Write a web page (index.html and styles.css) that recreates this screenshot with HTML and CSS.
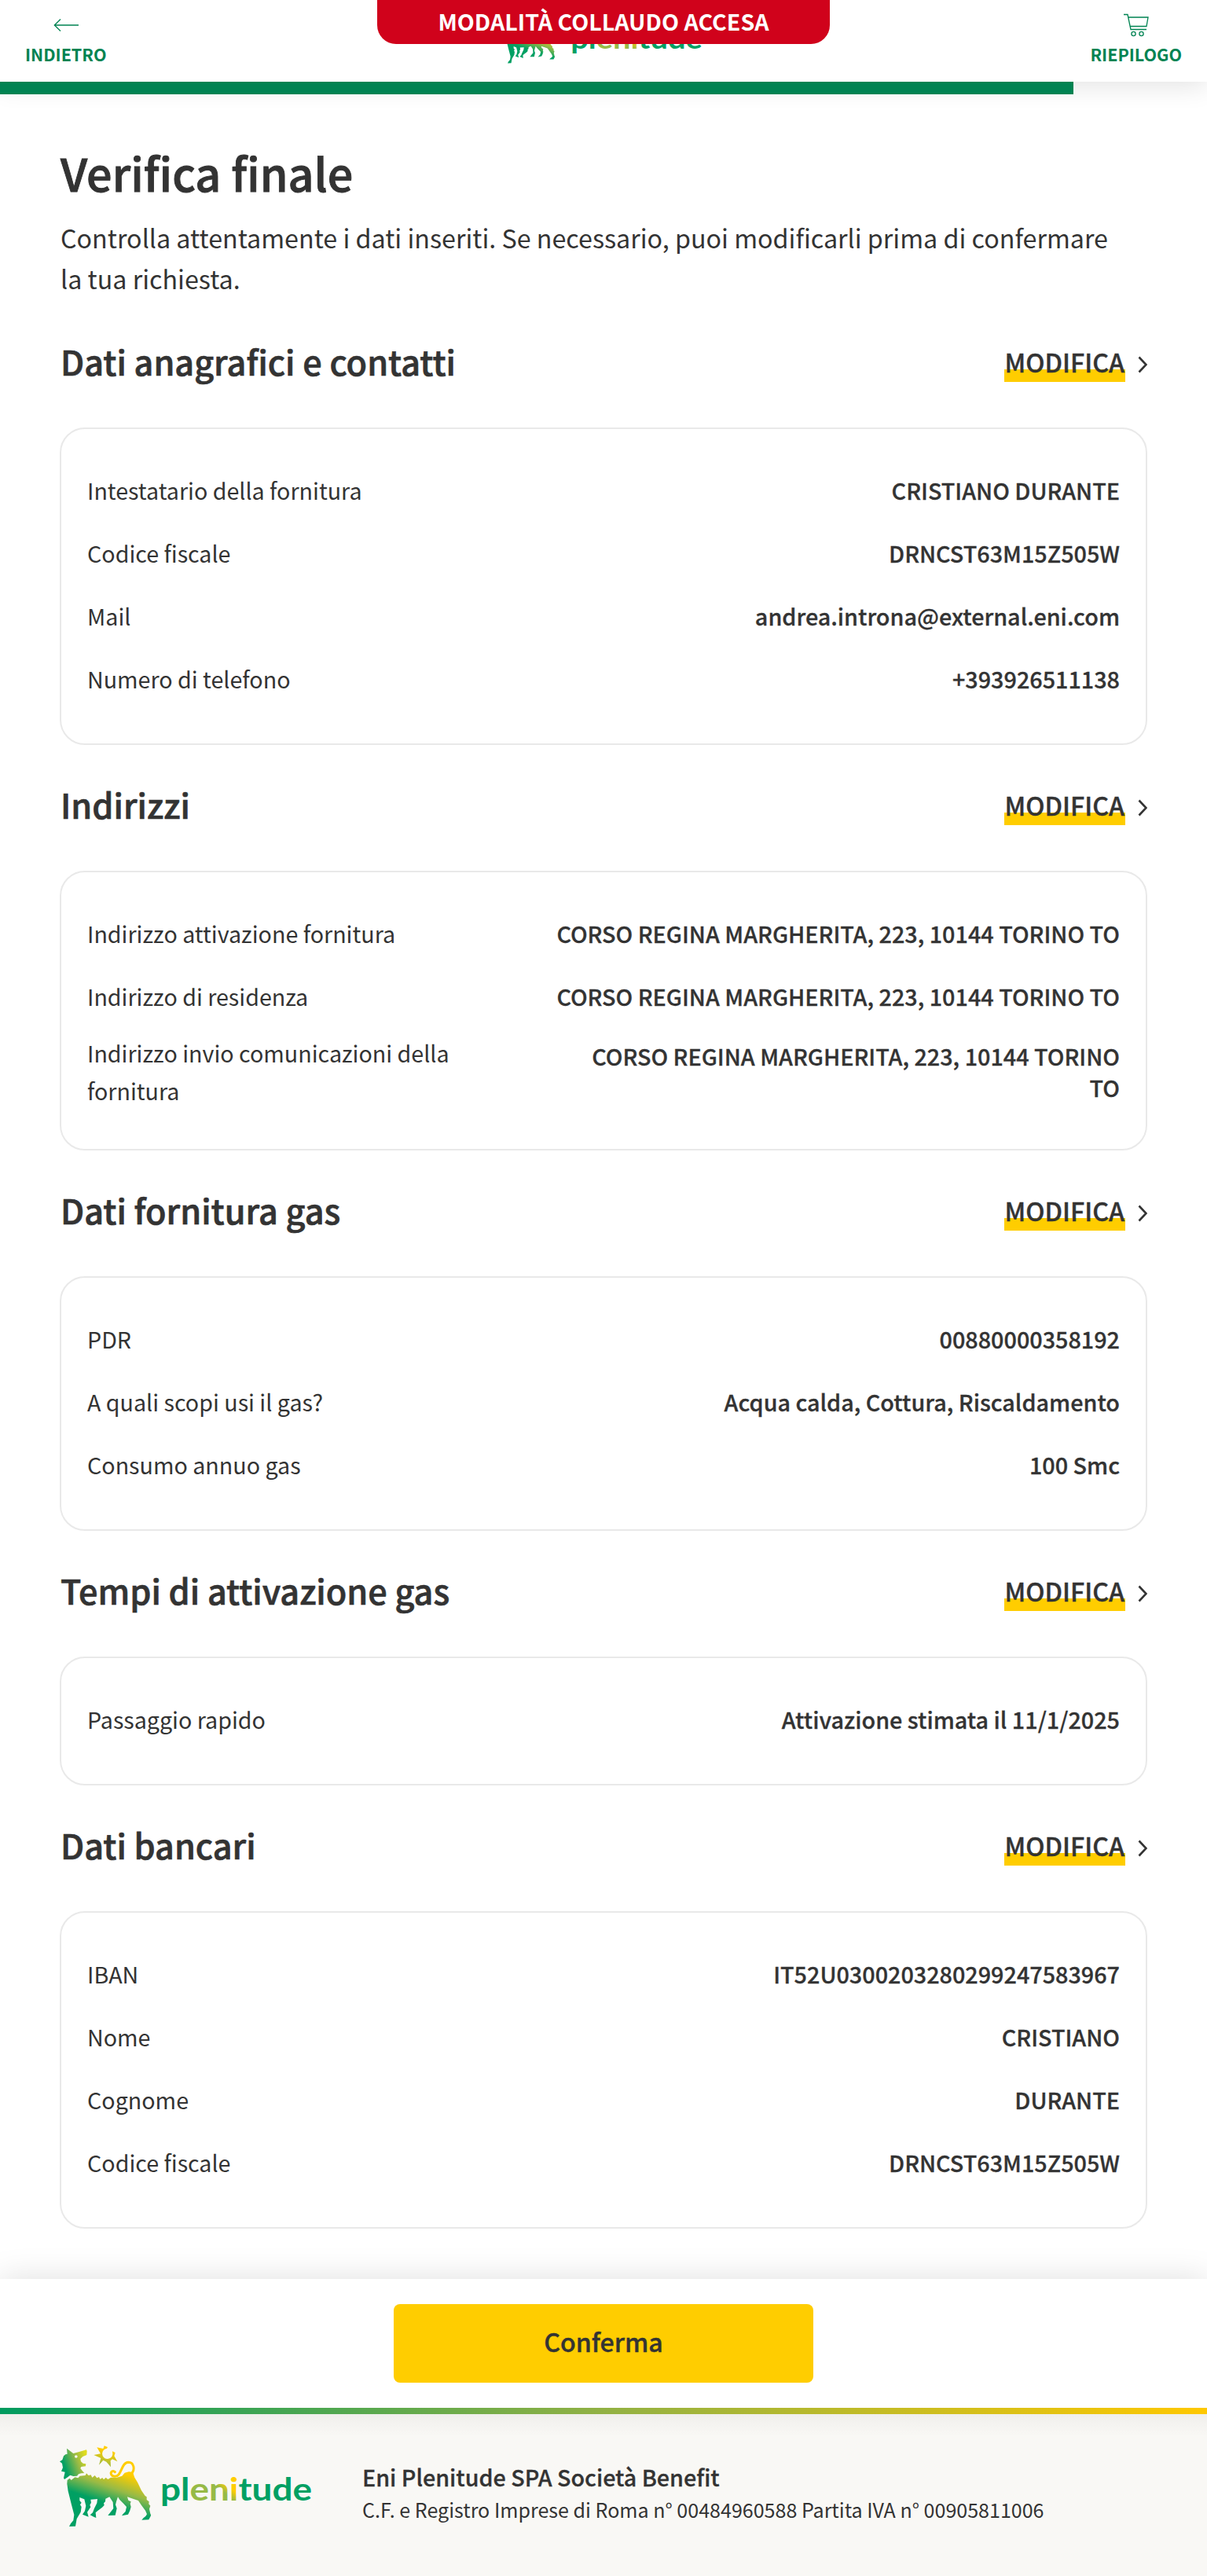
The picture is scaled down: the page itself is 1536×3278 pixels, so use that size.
FILE: index.html
```html
<!DOCTYPE html>
<html lang="it">
<head>
<meta charset="utf-8">
<title>Verifica finale</title>
<link rel="stylesheet" href="styles.css">
</head>
<body>
<svg class="defs" width="0" height="0" aria-hidden="true">
  <defs>
    <linearGradient id="head" gradientUnits="userSpaceOnUse" x1="28" y1="115" x2="120" y2="80"><stop offset=".08" stop-color="#00a063"/><stop offset=".6" stop-color="#97ba46"/><stop offset="1" stop-color="#e0dc1e"/></linearGradient>
    <linearGradient id="back" gradientUnits="userSpaceOnUse" x1="285" y1="145" x2="235" y2="290"><stop offset=".03" stop-color="#ffcd00"/><stop offset=".47" stop-color="#97ba46"/><stop offset=".88" stop-color="#00a063"/></linearGradient>
    <linearGradient id="sun" gradientUnits="userSpaceOnUse" x1="205" y1="50" x2="185" y2="118"><stop offset=".1" stop-color="#ffcd00"/><stop offset="1" stop-color="#97ba46"/></linearGradient>
    <linearGradient id="eni" gradientUnits="userSpaceOnUse" x1="96" y1="2" x2="74" y2="26"><stop offset=".4" stop-color="#ffcd00"/><stop offset=".7" stop-color="#97ba46"/></linearGradient>
    <symbol id="dog" viewBox="18 36 348 312">
      <path fill="url(#head)" fill-rule="evenodd" d="M45 47L58 57L70 66L92 60L120 52L122 58L121 72L106 78L97 87L99 97L107 104L118 106L117 115L100 117L97 123L104 132L112 141L100 142L90 145L84 152L70 153L58 149L46 158L36 165L33 160L38 137L24 134L30 120L27 104L18 97L28 91L33 76L40 70L47 68ZM75 78a5.500 5.500 0 1 0 11 0a5.500 5.500 0 1 0-11 0z"/>
      <path fill="url(#sun)" d="M160 43L184 48L188 37L201 42L198 47A20 20 0 1 0 220 70L219 58L230 63L226 76L238 97L219 88L212 94L213 118L196 98L184 92L168 110L175 84L148 72L174 67Z"/>
      <path fill="none" stroke="#ffcd00" stroke-width="9" stroke-linecap="round" stroke-linejoin="round" d="M229 137C221 129 210 137 215 147C220 156 236 156 243 147C256 131 258 101 280 100C302 100 307 129 291 144"/>
      <path fill="url(#back)" d="M47 168L56 161L62 168L76 157L88 160L95 152L116 150L120 142L128 150L137 148L142 158L152 150L160 160L168 156L172 164L181 159L186 166L194 158L202 165L213 158L236 158L256 152L266 140L282 136L297 138L304 158L315 176L330 208L344 228L350 232L350 243L359 250L358 259L364 266L360 278L364 296L367 302L358 319L331 320L338 312L346 306L351 298L345 284L330 264L318 246L300 240L276 232L280 245L290 250L287 258L290 270L286 284L279 299L255 304L260 297L269 288L273 270L262 258L247 243L240 232L234 250L231 262L236 276L230 302L202 303L212 290L223 276L221 252L208 232L193 239L192 250L186 256L188 264L180 272L164 284L155 292L157 312L148 308L134 301L144 292L150 276L160 256L162 240L136 242L138 254L133 263L136 271L130 280L123 290L128 308L105 299L114 286L118 266L112 241L94 234L94 246L101 254L96 262L101 270L98 290L83 316L78 344L54 345L60 334L70 322L73 300L62 258L50 210L46 182Z"/>
    </symbol>
    <symbol id="word" viewBox="0 0 193 38">
      <text class="word" y="30" textLength="193" lengthAdjust="spacingAndGlyphs"><tspan fill="#00a063">pl</tspan><tspan fill="url(#eni)">eni</tspan><tspan fill="#00a063">tude</tspan></text>
    </symbol>
  </defs>
</svg>
<header class="top">
  <a class="nav"><svg class="nav-icon" viewBox="0 0 32 32"><path d="M32 16H1M9 8.500L1.300 16L9 23.500"/></svg><span class="nav-text">INDIETRO</span></a>
  <div class="brand"><svg class="brand-dog"><use href="#dog"/></svg><svg class="brand-word"><use href="#word"/></svg></div>
  <a class="nav"><svg class="nav-icon" viewBox="0 0 32 32"><path d="M0 2.500h5l4 19h20M6 6h25l-2 11.500H8.300"/><circle cx="12.500" cy="27" r="2.600"/><circle cx="22.500" cy="27" r="2.600"/></svg><span class="nav-text">RIEPILOGO</span></a>
</header>
<div class="badge">MODALITÀ COLLAUDO ACCESA</div>
<div class="progress"></div>
<main class="content">
  <h1 class="title">Verifica finale</h1>
  <p class="intro">Controlla attentamente i dati inseriti. Se necessario, puoi modificarli prima di confermare<br>la tua richiesta.</p>

  <section class="block">
    <div class="block-head"><h2 class="block-title">Dati anagrafici e contatti</h2><a class="edit"><span class="edit-text">MODIFICA</span><svg class="chevron" viewBox="0 0 12 22"><path d="M1.500 1.500l9 9.500l-9 9.500"/></svg></a></div>
    <div class="card">
      <div class="row"><span class="label">Intestatario della fornitura</span><span class="value">CRISTIANO DURANTE</span></div>
      <div class="row"><span class="label">Codice fiscale</span><span class="value">DRNCST63M15Z505W</span></div>
      <div class="row"><span class="label">Mail</span><span class="value">andrea.introna@external.eni.com</span></div>
      <div class="row"><span class="label">Numero di telefono</span><span class="value">+393926511138</span></div>
    </div>
  </section>

  <section class="block">
    <div class="block-head"><h2 class="block-title">Indirizzi</h2><a class="edit"><span class="edit-text">MODIFICA</span><svg class="chevron" viewBox="0 0 12 22"><path d="M1.500 1.500l9 9.500l-9 9.500"/></svg></a></div>
    <div class="card">
      <div class="row"><span class="label">Indirizzo attivazione fornitura</span><span class="value">CORSO REGINA MARGHERITA, 223, 10144 TORINO TO</span></div>
      <div class="row"><span class="label">Indirizzo di residenza</span><span class="value">CORSO REGINA MARGHERITA, 223, 10144 TORINO TO</span></div>
      <div class="row"><span class="label">Indirizzo invio comunicazioni della<br>fornitura</span><span class="value">CORSO REGINA MARGHERITA, 223, 10144 TORINO<br>TO</span></div>
    </div>
  </section>

  <section class="block">
    <div class="block-head"><h2 class="block-title">Dati fornitura gas</h2><a class="edit"><span class="edit-text">MODIFICA</span><svg class="chevron" viewBox="0 0 12 22"><path d="M1.500 1.500l9 9.500l-9 9.500"/></svg></a></div>
    <div class="card">
      <div class="row"><span class="label">PDR</span><span class="value">00880000358192</span></div>
      <div class="row"><span class="label">A quali scopi usi il gas?</span><span class="value">Acqua calda, Cottura, Riscaldamento</span></div>
      <div class="row"><span class="label">Consumo annuo gas</span><span class="value">100 Smc</span></div>
    </div>
  </section>

  <section class="block">
    <div class="block-head"><h2 class="block-title">Tempi di attivazione gas</h2><a class="edit"><span class="edit-text">MODIFICA</span><svg class="chevron" viewBox="0 0 12 22"><path d="M1.500 1.500l9 9.500l-9 9.500"/></svg></a></div>
    <div class="card">
      <div class="row"><span class="label">Passaggio rapido</span><span class="value">Attivazione stimata il 11/1/2025</span></div>
    </div>
  </section>

  <section class="block">
    <div class="block-head"><h2 class="block-title">Dati bancari</h2><a class="edit"><span class="edit-text">MODIFICA</span><svg class="chevron" viewBox="0 0 12 22"><path d="M1.500 1.500l9 9.500l-9 9.500"/></svg></a></div>
    <div class="card">
      <div class="row"><span class="label">IBAN</span><span class="value">IT52U0300203280299247583967</span></div>
      <div class="row"><span class="label">Nome</span><span class="value">CRISTIANO</span></div>
      <div class="row"><span class="label">Cognome</span><span class="value">DURANTE</span></div>
      <div class="row"><span class="label">Codice fiscale</span><span class="value">DRNCST63M15Z505W</span></div>
    </div>
  </section>
</main>
<div class="actions"><button class="confirm">Conferma</button></div>
<footer class="footer">
  <div class="footer-brand"><svg class="footer-dog"><use href="#dog"/></svg><svg class="footer-word"><use href="#word"/></svg></div>
  <div class="legal"><div class="company">Eni Plenitude SPA Società Benefit</div><div class="registry">C.F. e Registro Imprese di Roma n° 00484960588 Partita IVA n° 00905811006</div></div>
</footer>
</body>
</html>
```

FILE: styles.css
```css
* { box-sizing: border-box; }
body { margin: 0; background: #fff; color: #333; font-family: "Noto Sans CJK SC", sans-serif; font-size: 28.650px; }
h1, h2, p { margin: 0; }
.defs { position: absolute; }
.word { font-family: Lato, sans-serif; font-weight: 700; font-size: 41px; }

.top { height: 104px; padding: 0 32px; display: flex; justify-content: space-between; box-shadow: 0 4px 32px rgba(0,0,0,.12); }
.nav { display: flex; flex-direction: column; align-items: center; color: #008352; padding-top: 16px; }
.nav-icon { width: 32px; height: 32px; fill: none; stroke: #008352; stroke-width: 1.300; }
.nav-text { font-size: 21.500px; line-height: 30px; font-weight: 700; margin-top: 6px; }
.brand { display: flex; padding: 21px 0 0 11px; gap: 20px; }
.brand-dog { width: 67px; height: 60px; }
.brand-word { width: 168px; height: 33px; margin-top: 15px; }
.badge { position: absolute; top: 0; left: 480px; width: 576px; height: 56px; border-radius: 0 0 24px 24px; background: #d0021b; color: #fff; font-weight: 700; font-size: 28.600px; line-height: 53px; text-align: center; }
.progress { width: 1366px; height: 16px; background: #008352; position: relative; }

.content { padding: 61px 76px 64px; }
.title { font-size: 57.500px; line-height: 76px; padding-left: 1px; font-weight: 500; -webkit-text-stroke: .9px #333; }
.intro { font-size: 32.250px; line-height: 52px; margin: 19px 0 4px; padding-left: 1px; }
.block { padding-top: 45px; }
.block-head { display: flex; justify-content: space-between; align-items: center; height: 60px; margin-bottom: 55px; }
.block-title { font-size: 43.200px; line-height: 60px; padding-left: 1px; font-weight: 500; -webkit-text-stroke: .7px #333; }
.edit { display: flex; align-items: center; gap: 16px; font-weight: 500; font-size: 32.200px; padding-top: 2px; }
.edit-text { line-height: 52px; padding: 0 1px; background: linear-gradient(#ffcd00, #ffcd00) 0 36px / 100% 16px no-repeat; -webkit-text-stroke: .4px #333; }
.chevron { width: 12px; height: 22px; margin-top: 8px; fill: none; stroke: #333; stroke-width: 2.600; }
.card { border: 2px solid #e9e9e9; border-radius: 32px; padding: 38px 33px 42px; }
.row { min-height: 80px; padding: 8px 0; display: flex; justify-content: space-between; align-items: center; }
.label { line-height: 48px; }
.value { font-size: 28.750px; font-weight: 500; line-height: 40px; text-align: right; -webkit-text-stroke: .3px #333; }

.actions { height: 164px; padding: 32px 0; display: flex; justify-content: center; background: #fff; box-shadow: 0 0 40px rgba(0,0,0,.13); position: relative; }
.confirm { width: 534px; height: 100px; padding: 0 0 6px; border: 0; border-radius: 8px; background: #ffcd00; color: #333; font: 500 32.200px/48px "Noto Sans CJK SC", sans-serif; -webkit-text-stroke: .4px #333; }
.footer { height: 214px; background: linear-gradient(#f0efec, #f9f8f5 28px); display: flex; align-items: flex-start; padding: 40px 76px; position: relative; border-top: 8px solid; border-image: linear-gradient(90deg, #009b5f, #92b144 50%, #ffc800) 1; }
.footer-brand { display: flex; gap: 12px; width: 385px; flex: none; }
.footer-dog { width: 116px; height: 104px; }
.footer-word { width: 193px; height: 38px; margin-top: 40px; }
.legal { padding-top: 20px; }
.company { font-weight: 500; font-size: 28.700px; line-height: 40px; -webkit-text-stroke: .3px #333; }
.registry { font-size: 25.050px; line-height: 40px; margin-top: 1px; }
```
